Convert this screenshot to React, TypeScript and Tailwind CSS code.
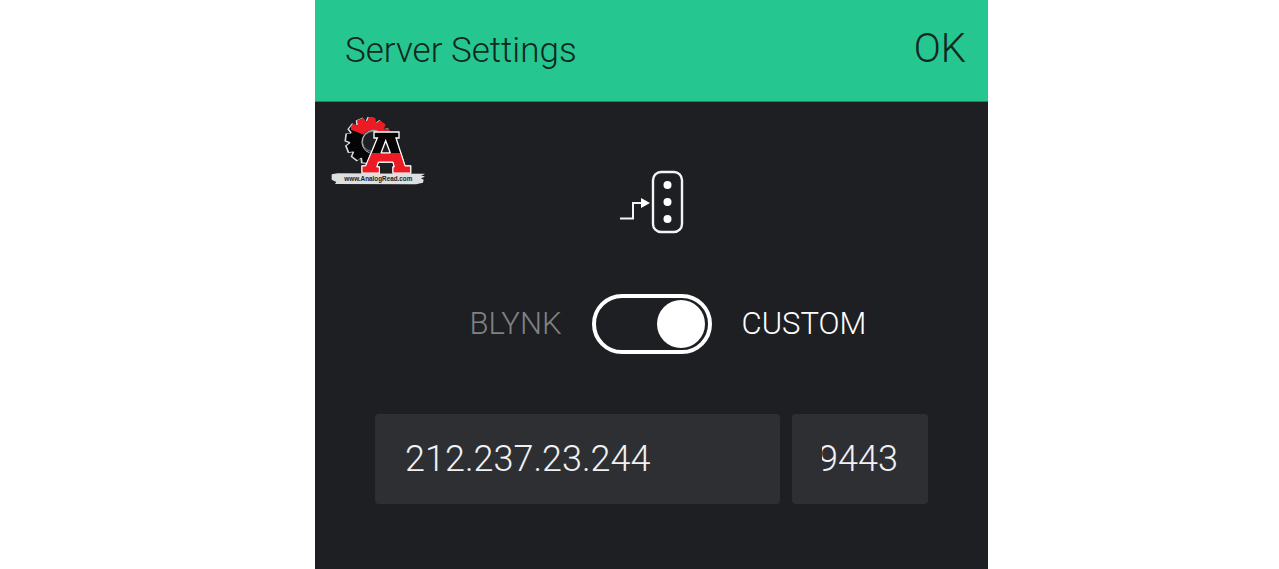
import { useLayoutEffect, useRef, useState } from 'react';

const teeth = Array.from({ length: 12 }, (_, i) => i * 30 + 8);

const letterPath =
  'M147 69H222V87H213L240 171H257V192H204V174H208L204 159H160L155 174H163V192H111V171H122L157 87H147Z M182 95L168 132H196Z';

function Gear() {
  return (
    <g>
      <circle cx="132" cy="94" r="57" />
      {teeth.map((angle) => (
        <path key={angle} d="M118 42L122 26H142L146 42Z" transform={`rotate(${angle} 132 94)`} />
      ))}
    </g>
  );
}

function AnalogReadLogo() {
  return (
    <svg viewBox="0 0 288 216" className="h-[72px] w-24" role="img" aria-label="AnalogRead logo">
      <defs>
        <clipPath id="gear-left"><path d="M40 0H230V75H160L130 170H40Z" /></clipPath>
        <clipPath id="gear-top"><path d="M78 0H230V78H118L78 62Z" /></clipPath>
        <clipPath id="letter-base"><path d="M60 132H270V196H60Z" /></clipPath>
      </defs>
      <g transform="translate(-18 -18)">
        <g clipPath="url(#gear-left)">
          <g fill="#d5dce1" stroke="#d5dce1" strokeWidth="4" transform="translate(-3 1)"><Gear /></g>
          <g fill="#050505"><Gear /></g>
          <g fill="#ed1c24" clipPath="url(#gear-top)"><Gear /></g>
        </g>
        <circle cx="143" cy="98" r="35" fill="#1e1f23" />
        <path d="M158 66A35 35 0 1 0 134 132" fill="none" stroke="#fff" strokeWidth="2" />
        <path d="M157 71A30 30 0 1 0 138 127" fill="none" stroke="#d5dce1" strokeWidth="1.5" />
        <path d={letterPath} fill="#050505" stroke="#fff" strokeWidth="4" fillRule="evenodd" />
        <g clipPath="url(#letter-base)">
          <path d={letterPath} fill="#ed1c24" stroke="#fff" strokeWidth="3" fillRule="evenodd" />
        </g>
      </g>
      <path d="M2 178L20 175L282 176L270 183H280V186L270 190L278 194L276 203L255 208L12 207L16 201L2 194Z" fill="#dedfdf" />
      <text x="142" y="198" textAnchor="middle" fill="#202124" fontSize="19" fontWeight="700" fontFamily="Liberation Sans, sans-serif">www.AnalogRead.com</text>
    </svg>
  );
}

function ServerIcon() {
  return (
    <svg viewBox="0 0 66 64" className="h-16 w-[66px]" fill="none" aria-hidden="true">
      <rect x="34" y="2" width="29" height="60" rx="8" stroke="#f4f4f5" strokeWidth="2.4" />
      <path d="M1 48.5H14V33H23" stroke="#f4f4f5" strokeWidth="2" />
      <path d="M22 28L31 33L22 38Z" fill="#fff" />
      <circle cx="48.5" cy="15" r="4" fill="#fff" />
      <circle cx="48.5" cy="32" r="4" fill="#fff" />
      <circle cx="48.5" cy="49" r="4" fill="#fff" />
    </svg>
  );
}

export default function App() {
  const [custom, setCustom] = useState(true);
  const [host, setHost] = useState('212.237.23.244');
  const [port, setPort] = useState('9443');
  const portRef = useRef<HTMLInputElement>(null);

  useLayoutEffect(() => {
    const field = portRef.current;
    if (field) field.scrollLeft = field.scrollWidth;
  }, [port]);

  return (
    <div className="min-h-screen bg-white pl-6 font-['Roboto','Liberation_Sans',sans-serif] font-light">
      <div className="mx-auto flex min-h-screen max-w-[673px] flex-col bg-[#1e1f23]">
        <header className="flex items-center justify-between border-b border-[#168b62] bg-[#26c690] pt-[25px] pr-[22px] pb-6 pl-[30px] text-[#10281f]">
          <h1 className="text-[35px] leading-[52px]">Server Settings</h1>
          <button type="button" className="pb-1 text-[40px] leading-[48px]">OK</button>
        </header>
        <main className="relative flex flex-1 flex-col items-center gap-[60px] px-[60px] pt-[68px] pb-16">
          <div className="absolute top-[13px] left-4"><AnalogReadLogo /></div>
          <ServerIcon />
          <div className="grid w-full grid-cols-[1fr_auto_1fr] items-center gap-[30px] text-[31px] leading-9">
            <span className="text-right text-[#808184]">BLYNK</span>
            <input
              type="checkbox"
              role="switch"
              aria-label="Use custom server"
              checked={custom}
              onChange={(e) => setCustom(e.target.checked)}
              className="flex h-[60px] w-[120px] appearance-none items-center rounded-full border-4 border-white px-[3px] before:size-12 before:rounded-full before:bg-white checked:justify-end"
            />
            <span className="text-white">CUSTOM</span>
          </div>
          <div className="flex w-full gap-3 text-[36px] text-[#f1f1f3]">
            <input
              aria-label="Server address"
              value={host}
              onChange={(e) => setHost(e.target.value)}
              className="h-[90px] min-w-0 flex-1 rounded bg-[#2e2f33] px-[30px]"
            />
            <input
              ref={portRef}
              aria-label="Port"
              value={port}
              onChange={(e) => setPort(e.target.value)}
              className="h-[90px] w-[136px] rounded bg-[#2e2f33] px-[30px]"
            />
          </div>
        </main>
      </div>
    </div>
  );
}
